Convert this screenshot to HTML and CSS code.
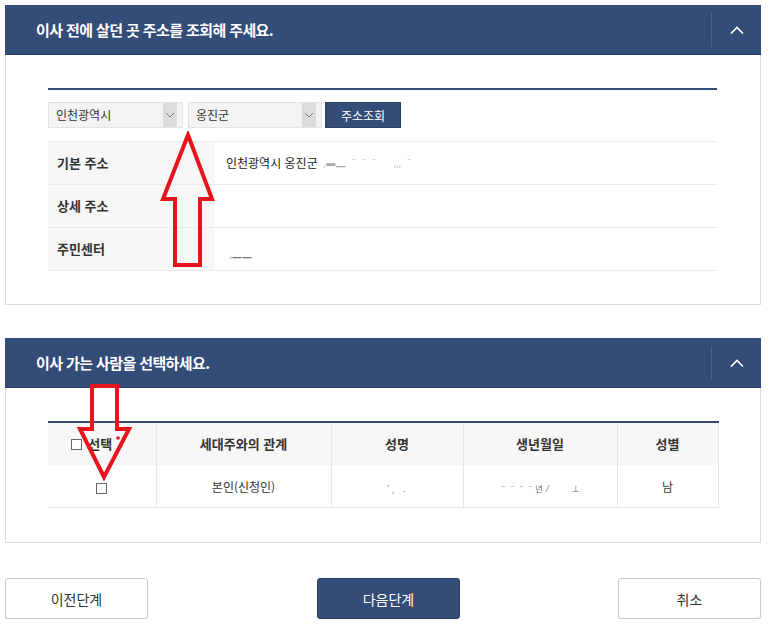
FILE: index.html
```html
<!DOCTYPE html>
<html lang="ko">
<head>
<meta charset="utf-8">
<link rel="stylesheet" href="styles.css">
</head>
<body>
<div class="page">
  <section class="panel panel-addr">
    <header class="panel-head">
      <h2 class="panel-title">이사 전에 살던 곳 주소를 조회해 주세요.</h2>
      <button class="toggle" aria-label="접기"><svg width="14" height="8" viewBox="0 0 14 8"><path d="M1 7.5 L7 1.5 L13 7.5" fill="none" stroke="#fff" stroke-width="1.6"/></svg></button>
    </header>
    <div class="panel-body">
      <div class="rule"></div>
      <div class="search">
        <div class="select"><span class="select-val">인천광역시</span><span class="select-arrow"><svg width="10" height="6" viewBox="0 0 10 6"><path d="M1 1 L5 5 L9 1" fill="none" stroke="#777" stroke-width="1"/></svg></span></div>
        <div class="select"><span class="select-val">옹진군</span><span class="select-arrow"><svg width="10" height="6" viewBox="0 0 10 6"><path d="M1 1 L5 5 L9 1" fill="none" stroke="#777" stroke-width="1"/></svg></span></div>
        <button class="btn-search">주소조회</button>
      </div>
      <div class="info">
        <div class="info-row"><div class="info-label">기본 주소</div><div class="info-val">인천광역시 옹진군 <span class="blur">ˌ▬▁ ˉˉˉ &nbsp; &nbsp; ˌˌˌ ˉ</span></div></div>
        <div class="info-row"><div class="info-label">상세 주소</div><div class="info-val"></div></div>
        <div class="info-row"><div class="info-label">주민센터</div><div class="info-val"><span class="blur low">ˌ▁▁</span></div></div>
      </div>
    </div>
  </section>

  <section class="panel panel-people">
    <header class="panel-head">
      <h2 class="panel-title">이사 가는 사람을 선택하세요.</h2>
      <button class="toggle" aria-label="접기"><svg width="14" height="8" viewBox="0 0 14 8"><path d="M1 7.5 L7 1.5 L13 7.5" fill="none" stroke="#fff" stroke-width="1.6"/></svg></button>
    </header>
    <div class="panel-body body-people">
      <table class="ptable">
        <thead>
          <tr><th class="c1"><span class="chk"></span>선택</th><th class="c2">세대주와의 관계</th><th class="c3">성명</th><th class="c4">생년월일</th><th class="c5">성별</th></tr>
        </thead>
        <tbody>
          <tr><td><span class="chk"></span></td><td>본인(신청인)</td><td><span class="blur">ˈ ˌ &nbsp; .</span></td><td><span class="blur">ˉˉˉˉ년 ⁄ &nbsp; &nbsp; &nbsp; ⊥</span></td><td>남</td></tr>
        </tbody>
      </table>
    </div>
  </section>

  <nav class="actions">
    <button class="btn btn-line">이전단계</button>
    <button class="btn btn-primary">다음단계</button>
    <button class="btn btn-line btn-last">취소</button>
  </nav>

  <svg class="arrow arrow-up" width="60" height="140" viewBox="0 0 60 140"><path d="M28 4 L52 68 L40 68 L40 134 L15 134 L15 68 L3 68 Z" fill="none" stroke="#e8141c" stroke-width="4" stroke-linejoin="miter"/></svg>
  <svg class="arrow arrow-down" width="60" height="100" viewBox="0 0 60 100"><path d="M15 3 L40 3 L40 46 L52 46 L27 94 L3 46 L15 46 Z" fill="none" stroke="#e8141c" stroke-width="4"/><circle cx="41" cy="55" r="1.8" fill="#e8141c"/></svg>
</div>
</body>
</html>
```
FILE: styles.css
```css
* { box-sizing: border-box; }
html, body { margin: 0; padding: 0; background: #fff; }
body { font-family: "Noto Sans CJK KR", "Noto Sans", sans-serif; color: #333; }
.page { position: relative; width: 773px; padding: 5px 12px 0 5px; }
.panel { border: 1px solid #dcdcdc; border-top: none; background: #fff; }
.panel-head { height: 50px; background: #344c78; display: flex; align-items: center; justify-content: space-between; border-bottom: 1px solid #2a3f66; margin: 0 -1px; }
.panel-title { margin: 0; padding-left: 31px; font-size: 15px; font-weight: 700; color: #fff; letter-spacing: -0.6px; }
.toggle { width: 50px; height: 34px; background: none; border: none; border-left: 1px solid #4b6390; display: flex; align-items: center; justify-content: center; padding: 0; }
.panel-addr { height: 300px; }
.panel-body { padding: 33px 43px 0 42px; }
.rule { height: 2px; background: #344c78; }
.search { display: flex; gap: 5px; margin-top: 12px; height: 26px; }
.select { width: 135px; display: flex; background: #f3f3f3; border: 1px solid #e3e3e3; }
.select + .select { width: 134px; }
.select-val { flex: 1; font-size: 12px; line-height: 24px; padding-left: 7px; color: #333; }
.select-arrow { width: 14px; background: #dcdcdc; display: flex; align-items: center; justify-content: center; margin-right: 5px; }
.btn-search { margin-left: -2px; width: 76px; background: #344c78; color: #fff; border: 1px solid #2a3f66; font-family: inherit; font-size: 12px; padding: 0; }
.info { margin-top: 13px; border-top: 1px solid #ebebeb; }
.info-row { display: flex; height: 43px; border-bottom: 1px solid #ebebeb; }
.info-label { width: 167px; background: #f7f7f7; font-size: 13px; font-weight: 700; color: #333; padding-left: 9px; display: flex; align-items: center; padding-bottom: 2px; }
.info-val { flex: 1; font-size: 12px; color: #222; padding-left: 11px; display: flex; align-items: center; padding-bottom: 1px; }
.blur { color: #aaa; font-size: 9px; letter-spacing: 1px; margin-left: 6px; }
.blur.low { margin-left: 4px; padding-top: 10px; color: #777; }
.panel-people { margin-top: 33px; height: 205px; }
.body-people { padding-top: 33px; }
.ptable { width: 670px; border-collapse: collapse; table-layout: fixed; border-top: 2px solid #344c78; }
.ptable th { height: 43px; background: #f7f7f7; font-size: 13px; font-weight: 700; color: #333; border-left: 1px solid #e6e6e6; padding: 0 0 2px; }
.ptable th.c1 { padding-right: 20px; }
.ptable td { height: 42px; font-size: 12px; color: #333; text-align: center; border-left: 1px solid #e6e6e6; border-bottom: 1px solid #e6e6e6; padding: 2px 0 0; }
.ptable tr > :first-child { border-left: none; }
.ptable tr > :last-child { border-right: 1px solid #e6e6e6; }
.c1 { width: 108px; }
.c2 { width: 175px; }
.c3 { width: 132px; }
.c4 { width: 154px; }
.c5 { width: 101px; }
.chk { display: inline-block; width: 11px; height: 11px; border: 1px solid #666; background: #fff; vertical-align: -1px; margin-right: 6px; }
.ptable td .chk { margin-right: 0; vertical-align: -2px; }
.ptable td .blur { margin-left: 0; font-size: 8px; color: #666; }
.actions { display: flex; margin-top: 35px; }
.btn { width: 143px; height: 41px; font-family: inherit; font-size: 14px; border-radius: 3px; cursor: pointer; }
.btn-line { background: #fff; border: 1px solid #c9c9c9; color: #333; box-shadow: 0 1px 1px #ddd; }
.btn-primary { margin-left: 169px; background: #344c78; border: 1px solid #2a3f66; color: #fff; }
.btn-last { margin-left: auto; }
.arrow { position: absolute; }
.arrow-up { left: 160px; top: 131px; }
.arrow-down { left: 77px; top: 383px; }
```
